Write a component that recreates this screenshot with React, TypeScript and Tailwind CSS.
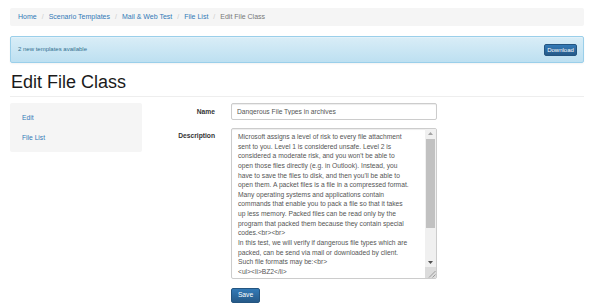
import React from "react";

const crumbs = ["Home", "Scenario Templates", "Mail & Web Test", "File List"];

const description = [
  "Microsoft assigns a level of risk to every file attachment",
  "sent to you. Level 1 is considered unsafe. Level 2 is",
  "considered a moderate risk, and you won't be able to",
  "open those files directly (e.g. in Outlook). Instead, you",
  "have to save the files to disk, and then you'll be able to",
  "open them. A packet files is a file in a compressed format.",
  "Many operating systems and applications contain",
  "commands that enable you to pack a file so that it takes",
  "up less memory. Packed files can be read only by the",
  "program that packed them because they contain special",
  "codes.<br><br>",
  "In this test, we will verify if dangerous file types which are",
  "packed, can be send via mail or downloaded by client.",
  "Such file formats may be:<br>",
  "<ul><li>BZ2</li>",
  "<li>RAR</li>",
  "<li>ZIP</li>",
  "<li>7Z</li>",
  "<li>TAR</li>",
  "</ul>",
].join("\n");

// windows-ish scrollbar drawn next to the textarea
function ScrollBar() {
  return (
    <div className="w-[11px] flex flex-col bg-[#f0f0f0]">
      <div className="h-[9px] flex items-center justify-center">
        <svg width="5" height="3" viewBox="0 0 5 3">
          <path d="M0 3 L2.5 0 L5 3 Z" fill="#a3a3a3" />
        </svg>
      </div>
      <div className="mt-[1px] mx-[1px] h-[89px] bg-[#c1c1c1]" />
      <div className="flex-1" />
      <div className="h-[9px] flex items-center justify-center">
        <svg width="5" height="3" viewBox="0 0 5 3">
          <path d="M0 0 L5 0 L2.5 3 Z" fill="#505050" />
        </svg>
      </div>
      <div className="h-[11px] bg-[#dcdcdc] flex items-end justify-end">
        <svg width="9" height="9" viewBox="0 0 9 9">
          <path d="M8.5 2 L2 8.5 M8.5 5.5 L5.5 8.5" stroke="#8a8a8a" strokeWidth="0.8" />
        </svg>
      </div>
    </div>
  );
}

export default function App() {
  return (
    <div className="min-h-screen bg-white font-['Liberation_Sans',Arial,sans-serif] text-[6.7px] leading-[9.5px] text-[#333] px-[10px] pt-[8px]">
      {/* Breadcrumb */}
      <ol className="flex items-center h-[18px] w-[574px] bg-[#f5f5f5] rounded-[2px] pl-[8px] text-[7px]">
        {crumbs.map((c) => (
          <li key={c} className="flex items-center">
            <a href="#" className="text-[#337ab7]">{c}</a>
            <span className="text-[#ccc] mx-[5px]">/</span>
          </li>
        ))}
        <li className="text-[#777]">Edit File Class</li>
      </ol>

      {/* Alert */}
      <div className="mt-[10px] w-[574px] h-[27px] flex items-center justify-between pl-[7px] pr-[6px] rounded-[2px] border border-[#9acfea] bg-gradient-to-b from-[#d9edf7] to-[#bde0f1] text-[#31708f] text-[6px] shadow-[inset_0_1px_0_rgba(255,255,255,0.25),0_1px_2px_rgba(0,0,0,0.05)]">
        <span>2 new templates available</span>
        <button className="h-[12px] w-[33px] rounded-[2px] border border-[#245580] bg-gradient-to-b from-[#337ab7] to-[#265a88] text-white text-[6px] leading-none">
          Download
        </button>
      </div>

      {/* Page header */}
      <div className="w-[574px] mt-[9px] pb-[4px] border-b border-[#eee]">
        <h1 className="pl-[1px] text-[18px] leading-[20px] text-[#1a1a1a]">Edit File Class</h1>
      </div>

      <div className="flex mt-[6px]">
        {/* Side nav */}
        <ul className="w-[132px] h-[49px] bg-[#f5f5f5] rounded-[2px] py-[5px] flex flex-col gap-[1px]">
          <li className="h-[19px] leading-[19px] pl-[12px]">
            <a href="#" className="text-[#337ab7]">Edit</a>
          </li>
          <li className="h-[19px] leading-[19px] pl-[12px]">
            <a href="#" className="text-[#337ab7]">File List</a>
          </li>
        </ul>

        {/* Form */}
        <form className="flex flex-col">
          <div className="flex items-center">
            <label className="w-[73px] text-right font-bold">Name</label>
            <input
              defaultValue="Dangerous File Types in archives"
              className="ml-[16px] w-[206px] h-[17px] px-[5px] border border-[#ccc] rounded-[2px] text-[#555] text-[6.7px] shadow-[inset_0_1px_1px_rgba(0,0,0,0.075)] outline-none"
            />
          </div>
          <div className="flex items-start mt-[8px]">
            <label className="w-[73px] text-right font-bold pt-[3px]">Description</label>
            <div className="ml-[16px] w-[206px] h-[151px] flex border border-[#ccc] rounded-[2px] overflow-hidden shadow-[inset_0_1px_1px_rgba(0,0,0,0.075)]">
              <textarea
                wrap="off"
                defaultValue={description}
                className="flex-1 min-w-0 h-full pt-[3px] pl-[6px] pr-[2px] pb-0 text-[#555] text-[6.7px] leading-[9.63px] overflow-hidden resize-none bg-transparent outline-none"
              />
              <ScrollBar />
            </div>
          </div>
          <div className="flex mt-[9px]">
            <div className="w-[89px]" />
            <button
              type="button"
              className="w-[29px] h-[15px] rounded-[2px] border border-[#245580] bg-gradient-to-b from-[#337ab7] to-[#265a88] text-white text-[6.7px] leading-none"
            >
              Save
            </button>
          </div>
        </form>
      </div>
    </div>
  );
}
